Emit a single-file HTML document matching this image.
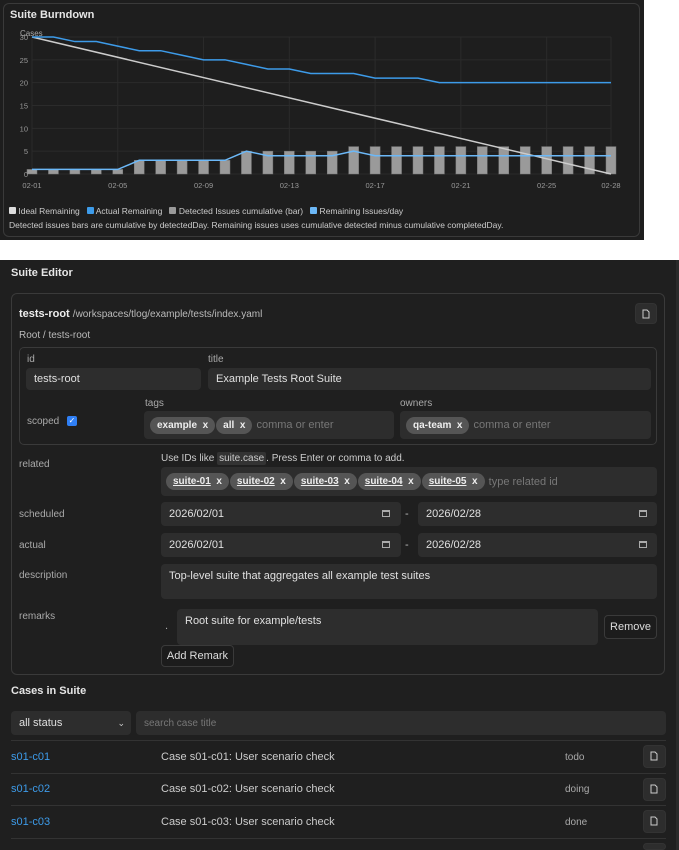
<!DOCTYPE html>
<html><head><meta charset="utf-8">
<style>
*{box-sizing:border-box;margin:0;padding:0}
body{width:679px;height:850px;background:#fff;font-family:"Liberation Sans",sans-serif;font-size:11px;color:#ddd;position:relative;overflow:hidden}
.a{position:absolute}
.top{left:0;top:0;width:644px;height:240px;background:#1e1e1e}
.card{left:3px;top:3px;width:637px;height:234px;border:1px solid #3a3a3a;border-radius:6px}
.ed{left:0;top:260px;width:676px;height:590px;background:#1f1f1f}
.sb{left:676px;top:260px;width:3px;height:590px;background:#2a2a2a}
.h{font-weight:bold;color:#e6e6e6;font-size:11px}
.lab{color:#aaa;font-size:10px}
.inp{background:#2d2d2d;border-radius:4px;color:#e0e0e0;padding-left:8px;display:flex;align-items:center}
.chip{display:inline-block;background:#555;border-radius:10px;padding:3px 7px;color:#eee;margin-right:1px;font-size:10px;font-weight:600}
.chip u{text-decoration:underline}
.ph{color:#777}
.btn{background:#1c1c1c;border:1px solid #3a3a3a;border-radius:4px;color:#ddd;display:flex;align-items:center;justify-content:center}
.ib{background:#2d2d2d;border:1px solid #333;border-radius:4px}
.line{height:1px;background:#333}
.blue{color:#3d9be9}
.ct{color:#ccc}
</style></head><body>
<div class="a top"></div>
<div class="a card"></div>
<div class="a h" style="left:10px;top:9px">Suite Burndown</div>
<svg class="a" style="left:0;top:0" width="644" height="200" id="ch">
<g stroke="#2b2b2b" stroke-width="1" id="grid"></g>
<g fill="#9a9a9a" stroke="#777" stroke-width="0.5" id="bars"></g>
<g id="lines"></g>
<g fill="#999" font-size="7.5" font-family="Liberation Sans" id="lbl"></g>
<text x="20" y="36" fill="#aaa" font-size="8" font-family="Liberation Sans">Cases</text>
</svg>
<div class="a" style="left:9px;top:206px;font-size:8.5px;color:#ccc;white-space:nowrap">
<span style="display:inline-block;width:7px;height:7px;background:#ddd;border-radius:1px"></span> Ideal Remaining &nbsp;
<span style="display:inline-block;width:7px;height:7px;background:#3d9be9;border-radius:1px"></span> Actual Remaining &nbsp;
<span style="display:inline-block;width:7px;height:7px;background:#9a9a9a;border-radius:1px"></span> Detected Issues cumulative (bar) &nbsp;
<span style="display:inline-block;width:7px;height:7px;background:#6cb8f7;border-radius:1px"></span> Remaining Issues/day</div>
<div class="a" style="left:9px;top:220px;font-size:8.5px;color:#ccc;white-space:nowrap">Detected issues bars are cumulative by detectedDay. Remaining issues uses cumulative detected minus cumulative completedDay.</div>

<div class="a ed"></div><div class="a sb"></div>
<div class="a h" style="left:11px;top:267px">Suite Editor</div>
<div class="a" style="left:11px;top:293px;width:654px;height:382px;border:1px solid #3a3a3a;border-radius:6px"></div>
<div class="a" style="left:19px;top:308px"><b style="color:#eee">tests-root</b> <span style="color:#bbb;font-size:10px">/workspaces/tlog/example/tests/index.yaml</span></div>
<div class="a ib" style="left:635px;top:303px;width:22px;height:21px"></div>
<div class="a lab" style="left:19px;top:330px;color:#bbb">Root / tests-root</div>
<div class="a" style="left:19px;top:347px;width:638px;height:98px;border:1px solid #3a3a3a;border-radius:5px"></div>
<div class="a lab" style="left:27px;top:354px">id</div>
<div class="a inp" style="left:26px;top:368px;width:175px;height:22px">tests-root</div>
<div class="a lab" style="left:208px;top:354px">title</div>
<div class="a inp" style="left:208px;top:368px;width:443px;height:22px">Example Tests Root Suite</div>
<div class="a lab" style="left:27px;top:416px">scoped</div>
<div class="a" style="left:67px;top:416px;width:10px;height:10px;background:#2f7ff5;border-radius:2px;color:#fff;font-size:8px;line-height:10px;text-align:center">✓</div>
<div class="a lab" style="left:145px;top:398px">tags</div>
<div class="a inp" style="left:144px;top:411px;width:250px;height:28px;padding-left:6px"><span class="chip">example&nbsp; x</span><span class="chip">all&nbsp; x</span><span class="ph">&nbsp;comma or enter</span></div>
<div class="a lab" style="left:400px;top:398px">owners</div>
<div class="a inp" style="left:400px;top:411px;width:251px;height:28px;padding-left:6px"><span class="chip">qa-team&nbsp; x</span><span class="ph">&nbsp;comma or enter</span></div>
<div class="a lab" style="left:19px;top:459px">related</div>
<div class="a" style="left:161px;top:453px;font-size:10px;color:#ccc">Use IDs like <span style="background:#333;padding:1px 2px;border-radius:2px">suite.case</span>. Press Enter or comma to add.</div>
<div class="a inp" style="left:161px;top:467px;width:496px;height:29px;padding-left:5px"><span class="chip"><u>suite-01</u>&nbsp; x</span><span class="chip"><u>suite-02</u>&nbsp; x</span><span class="chip"><u>suite-03</u>&nbsp; x</span><span class="chip"><u>suite-04</u>&nbsp; x</span><span class="chip"><u>suite-05</u>&nbsp; x</span><span class="ph">&nbsp;type related id</span></div>
<div class="a lab" style="left:19px;top:509px">scheduled</div>
<div class="a inp" style="left:161px;top:502px;width:240px;height:24px">2026/02/01</div>
<div class="a" style="left:405px;top:508px;color:#bbb">-</div>
<div class="a inp" style="left:418px;top:502px;width:239px;height:24px">2026/02/28</div>
<div class="a lab" style="left:19px;top:540px">actual</div>
<div class="a inp" style="left:161px;top:533px;width:240px;height:24px">2026/02/01</div>
<div class="a" style="left:405px;top:539px;color:#bbb">-</div>
<div class="a inp" style="left:418px;top:533px;width:239px;height:24px">2026/02/28</div>
<div class="a" style="left:382px;top:510px;width:8px;height:7px;border:1px solid #aaa;border-top-width:2px"></div>
<div class="a" style="left:639px;top:510px;width:8px;height:7px;border:1px solid #aaa;border-top-width:2px"></div>
<div class="a" style="left:382px;top:541px;width:8px;height:7px;border:1px solid #aaa;border-top-width:2px"></div>
<div class="a" style="left:639px;top:541px;width:8px;height:7px;border:1px solid #aaa;border-top-width:2px"></div>
<div class="a lab" style="left:19px;top:570px">description</div>
<div class="a inp" style="left:161px;top:564px;width:496px;height:35px;align-items:flex-start;padding-top:6px">Top-level suite that aggregates all example test suites</div>
<div class="a lab" style="left:19px;top:611px">remarks</div>
<div class="a" style="left:165px;top:620px;color:#aaa">.</div>
<div class="a inp" style="left:177px;top:609px;width:421px;height:36px;align-items:flex-start;padding-top:6px">Root suite for example/tests</div>
<div class="a btn" style="left:604px;top:615px;width:53px;height:24px">Remove</div>
<div class="a btn" style="left:161px;top:645px;width:73px;height:22px">Add Remark</div>
<div class="a h" style="left:11px;top:685px">Cases in Suite</div>
<div class="a inp" style="left:11px;top:711px;width:120px;height:24px">all status<span style="position:absolute;right:6px;color:#ccc;font-size:9px">⌄</span></div>
<div class="a inp" style="left:136px;top:711px;width:530px;height:24px;color:#777;font-size:10px">search case title</div>
<div class="a line" style="left:11px;top:740px;width:655px"></div>
<div class="a line" style="left:11px;top:773px;width:655px"></div>
<div class="a line" style="left:11px;top:805px;width:655px"></div>
<div class="a line" style="left:11px;top:838px;width:655px"></div>
<div class="a blue" style="left:11px;top:751px">s01-c01</div>
<div class="a ct" style="left:161px;top:751px">Case s01-c01: User scenario check</div>
<div class="a lab" style="left:565px;top:752px">todo</div>
<div class="a ib" style="left:643px;top:745px;width:23px;height:23px"></div>
<div class="a blue" style="left:11px;top:783px">s01-c02</div>
<div class="a ct" style="left:161px;top:783px">Case s01-c02: User scenario check</div>
<div class="a lab" style="left:565px;top:784px">doing</div>
<div class="a ib" style="left:643px;top:778px;width:23px;height:23px"></div>
<div class="a blue" style="left:11px;top:816px">s01-c03</div>
<div class="a ct" style="left:161px;top:816px">Case s01-c03: User scenario check</div>
<div class="a lab" style="left:565px;top:817px">done</div>
<div class="a ib" style="left:643px;top:810px;width:23px;height:23px"></div>
<div class="a ib" style="left:643px;top:843px;width:23px;height:7px"></div>
<svg class="a" style="left:0;top:0;pointer-events:none" width="679" height="850">
<g fill="none" stroke="#ccc" stroke-width="1">
<path d="M643 310h4l2 2v6h-6z"/><path d="M651 752h4l2 2v6h-6z"/><path d="M651 785h4l2 2v6h-6z"/><path d="M651 817h4l2 2v6h-6z"/>
</g></svg>
<script>
var X=function(d){return 32+(d-1)*21.444},Y=function(v){return 174-v*4.567};
var g='',b='',l='',t='';
[0,5,10,15,20,25,30].forEach(function(v){g+='<line x1="32" x2="611" y1="'+Y(v)+'" y2="'+Y(v)+'"/>';t+='<text x="28" y="'+(Y(v)+3)+'" text-anchor="end">'+v+'</text>';});
[1,5,9,13,17,21,25,28].forEach(function(d){g+='<line y1="37" y2="174" x1="'+X(d)+'" x2="'+X(d)+'"/>';t+='<text x="'+X(d)+'" y="188" text-anchor="middle">02-'+(d<10?'0'+d:d)+'</text>';});
var act=[30,30,29,29,28,27,27,26,25,25,24,23,23,22,22,22,21,21,21,20,20,20,20,20,20,20,20,20];
var det=[1,1,1,1,1,3,3,3,3,3,5,5,5,5,5,6,6,6,6,6,6,6,6,6,6,6,6,6];
var rem=[1,1,1,1,1,3,3,3,3,3,5,4,4,4,4,5,4,4,4,4,4,4,4,4,4,4,4,4];
for(var i=0;i<28;i++){var x=X(i+1);b+='<rect x="'+(x-5)+'" y="'+Y(det[i])+'" width="10" height="'+(det[i]*4.567)+'"/>';}
function pl(a,c){return '<polyline fill="none" stroke="'+c+'" stroke-width="1.5" points="'+a.map(function(v,i){return X(i+1)+','+Y(v)}).join(' ')+'"/>';}
l+='<line x1="'+X(1)+'" y1="'+Y(30)+'" x2="'+X(28)+'" y2="'+Y(0)+'" stroke="#ccc" stroke-width="1.5"/>';
l+=pl(act,'#3d9be9')+pl(rem,'#6cb8f7');
document.getElementById('grid').innerHTML=g;document.getElementById('bars').innerHTML=b;document.getElementById('lines').innerHTML=l;document.getElementById('lbl').innerHTML=t;
</script>
</body></html>
